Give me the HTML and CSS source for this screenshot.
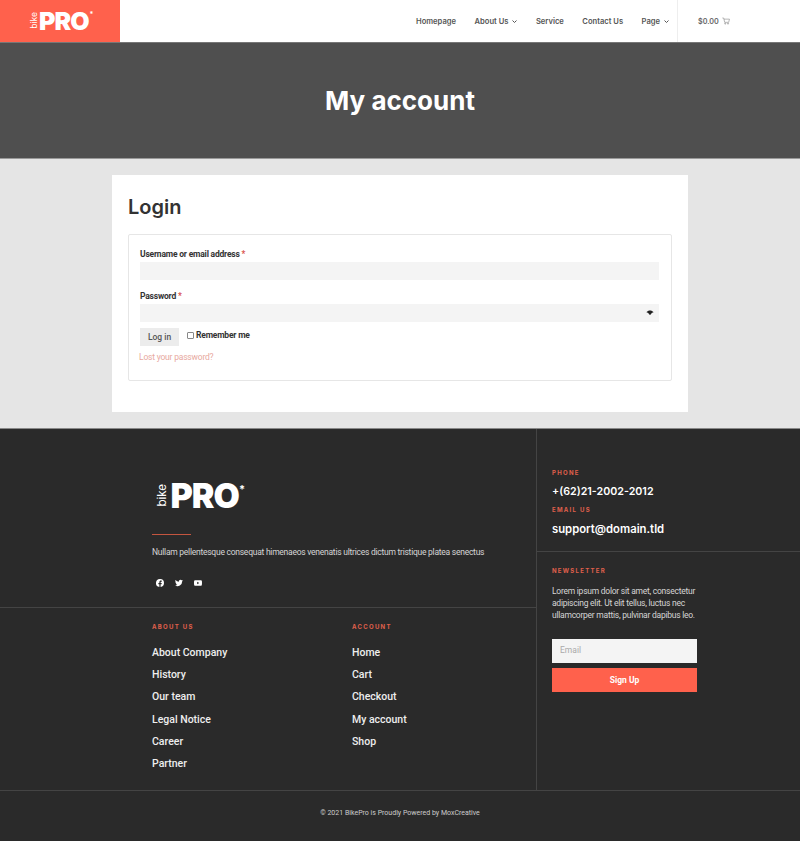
FILE: index.html
```html
<!DOCTYPE html>
<html>

<head>
    <title>My account - BikePro</title>
    <link rel="stylesheet" href="styles.css">
</head>

<body>
    <header class="site-header">
        <a class="logo-box" href="#">
            <span class="logo logo-small">
                <span class="logo-bike">bike</span><span class="logo-pro">PRO</span><span class="logo-star">*</span>
            </span>
        </a>
        <nav class="main-nav">
            <a href="#">Homepage</a>
            <a href="#">About Us
                <svg class="chevron" viewBox="0 0 8 8"><path d="M3.5 3.5l2 2 2-2" /></svg>
            </a>
            <a href="#">Service</a>
            <a href="#">Contact Us</a>
            <a href="#">Page
                <svg class="chevron" viewBox="0 0 8 8"><path d="M3.5 3.5l2 2 2-2" /></svg>
            </a>
        </nav>
        <a class="cart" href="#">$0.00
            <svg class="cart-icon" viewBox="0 0 12 12"><path d="M.5 1.5h2L4 8h6l1.2-4.8H3" /><circle cx="4.8" cy="10" r=".8" /><circle cx="9" cy="10" r=".8" /></svg>
        </a>
    </header>

    <section class="page-title">
        <h1>My account</h1>
    </section>

    <main class="page-body">
        <div class="account-card">
            <h2>Login</h2>
            <form class="login-form">
                <label class="field-label">Username or email address <span class="required">*</span></label>
                <div class="field"></div>
                <label class="field-label">Password <span class="required">*</span></label>
                <div class="field field-password">
                    <svg class="eye" viewBox="0 0 20 20"><path d="M1 8c2.500-2.500 5.500-4 9-4s6.500 1.500 9 4c-2.500 .5-4.500 1.500-5.500 3.500-1 2-2 3-3.500 3s-2.500-1-3.500-3C5.500 9.500 3.500 8.500 1 8z" /></svg>
                </div>
                <div class="login-row">
                    <button type="button" class="login-btn">Log in</button>
                    <label class="remember"><span class="checkbox"></span>Remember me</label>
                </div>
                <a class="lost-link" href="#">Lost your password?</a>
            </form>
        </div>
    </main>

    <footer class="site-footer">
        <div class="footer-main">
            <div class="footer-left">
                <div class="footer-brand">
                    <span class="logo logo-large">
                        <span class="logo-bike">bike</span><span class="logo-pro">PRO</span><span class="logo-star">*</span>
                    </span>
                    <div class="brand-rule"></div>
                    <p class="brand-text">Nullam pellentesque consequat himenaeos venenatis ultrices dictum tristique platea senectus</p>
                    <div class="social">
                        <svg viewBox="0 0 24 24"><path d="M24 12a12 12 0 1 0-13.900 11.900v-8.400H7.100V12h3V9.400c0-3 1.800-4.700 4.500-4.700 1.300 0 2.700.2 2.700.2v3h-1.500c-1.500 0-2 .9-2 1.900V12h3.400l-.5 3.500h-2.900v8.400A12 12 0 0 0 24 12z" /></svg>
                        <svg viewBox="0 0 24 24"><path d="M24 4.600a10 10 0 0 1-2.800.8 4.900 4.900 0 0 0 2.100-2.700 9.800 9.800 0 0 1-3.100 1.200 4.900 4.900 0 0 0-8.400 4.500A14 14 0 0 1 1.700 3.200a4.900 4.900 0 0 0 1.500 6.500 4.900 4.900 0 0 1-2.200-.6c0 2.300 1.600 4.400 3.900 4.900a4.900 4.900 0 0 1-2.200.1 4.900 4.900 0 0 0 4.600 3.400A9.900 9.900 0 0 1 0 19.500a14 14 0 0 0 21.500-12.400A10 10 0 0 0 24 4.600z" /></svg>
                        <svg viewBox="0 0 24 24"><path d="M23.500 6.200a3 3 0 0 0-2.100-2.100C19.500 3.500 12 3.500 12 3.500s-7.500 0-9.400.6A3 3 0 0 0 .5 6.200C0 8.100 0 12 0 12s0 3.900.5 5.800a3 3 0 0 0 2.100 2.100c1.900.6 9.400.6 9.400.6s7.500 0 9.400-.6a3 3 0 0 0 2.100-2.100c.5-1.900.5-5.800.5-5.800s0-3.900-.5-5.800zM9.500 15.600V8.400l6.300 3.600-6.300 3.600z" /></svg>
                    </div>
                </div>
                <div class="footer-links">
                    <div class="link-col">
                        <h4 class="footer-label">About Us</h4>
                        <a href="#">About Company</a>
                        <a href="#">History</a>
                        <a href="#">Our team</a>
                        <a href="#">Legal Notice</a>
                        <a href="#">Career</a>
                        <a href="#">Partner</a>
                    </div>
                    <div class="link-col">
                        <h4 class="footer-label">Account</h4>
                        <a href="#">Home</a>
                        <a href="#">Cart</a>
                        <a href="#">Checkout</a>
                        <a href="#">My account</a>
                        <a href="#">Shop</a>
                    </div>
                </div>
            </div>
            <div class="footer-right">
                <div class="contact">
                    <h4 class="footer-label">Phone</h4>
                    <div class="contact-value contact-phone">+(62)21-2002-2012</div>
                    <h4 class="footer-label">Email Us</h4>
                    <div class="contact-value">support@domain.tld</div>
                </div>
                <div class="newsletter">
                    <h4 class="footer-label">Newsletter</h4>
                    <p>Lorem ipsum dolor sit amet, consectetur adipiscing elit. Ut elit tellus, luctus nec ullamcorper mattis, pulvinar dapibus leo.</p>
                    <div class="email-box">Email</div>
                    <button type="button" class="signup-btn">Sign Up</button>
                </div>
            </div>
        </div>
        <div class="footer-bottom">© 2021 BikePro is Proudly Powered by MoxCreative</div>
    </footer>
</body>

</html>
```

FILE: styles.css
```css
* {
    box-sizing: border-box;
}

body {
    margin: 0;
    font-family: Roboto, Arial, sans-serif;
    background-color: #e5e5e5;
    color: #333;
}

a {
    text-decoration: none;
}

.site-header {
    display: flex;
    align-items: stretch;
    height: 43px;
    background-color: #fff;
    border-bottom: 1px solid #777;
}

.logo-box {
    display: flex;
    align-items: center;
    justify-content: center;
    width: 120px;
    padding-left: 3px;
    background-color: #ff614c;
}

.logo {
    display: flex;
    align-items: flex-start;
    color: #fff;
    font-family: Inter, Arial, sans-serif;
}

.logo-bike {
    writing-mode: vertical-rl;
    transform: rotate(180deg);
    font-weight: 400;
    line-height: 1;
}

.logo-pro {
    font-weight: 900;
    line-height: 1;
    letter-spacing: -1px;
}

.logo-star {
    line-height: 1;
    font-weight: 700;
}

.logo-small .logo-bike {
    font-size: 8.5px;
    margin-top: 3px;
    margin-right: 1px;
}

.logo-small .logo-pro {
    font-size: 25px;
}

.logo-small .logo-star {
    font-size: 7px;
    margin-top: 2px;
    margin-left: 1px;
}

.logo-large {
    margin-left: 5px;
}

.logo-large .logo-bike {
    font-size: 11.5px;
    margin-top: 5px;
    margin-right: 2px;
}

.logo-large .logo-pro {
    font-size: 34px;
}

.logo-large .logo-star {
    font-size: 11px;
    margin-top: 5px;
}

.main-nav {
    display: flex;
    align-items: center;
    gap: 18.5px;
    margin-left: auto;
    padding-right: 8px;
    font-family: Inter, Arial, sans-serif;
}

.main-nav a {
    display: flex;
    align-items: center;
    gap: 1px;
    font-size: 7.6px;
    font-weight: 600;
    color: #555;
}

.chevron {
    width: 8px;
    height: 8px;
    fill: none;
    stroke: #555;
    stroke-width: 1;
}

.cart {
    display: flex;
    align-items: center;
    gap: 3px;
    width: 123px;
    padding-left: 20px;
    border-left: 1px solid #eee;
    font-family: Inter, Arial, sans-serif;
    font-size: 7.2px;
    font-weight: 600;
    color: #666;
}

.cart-icon {
    width: 8px;
    height: 8px;
    fill: none;
    stroke: #777;
    stroke-width: .8;
}

.page-title {
    display: flex;
    align-items: center;
    justify-content: center;
    height: 116px;
    background-color: #4f4f4f;
    border-bottom: 1px solid #999;
}

.page-title h1 {
    margin: 0;
    font-family: Inter, Arial, sans-serif;
    font-size: 26px;
    font-weight: 700;
    color: #fff;
}

.page-body {
    height: 269px;
    padding-top: 16px;
}

.account-card {
    width: 576px;
    height: 237px;
    margin: 0 auto;
    padding: 16px;
    background-color: #fff;
}

.account-card h2 {
    margin: 0 0 14px;
    height: 29px;
    padding-top: 3px;
    line-height: 26px;
    font-family: Inter, Arial, sans-serif;
    font-size: 20px;
    font-weight: 600;
    color: #333;
}

.login-form {
    display: flex;
    flex-direction: column;
    align-items: flex-start;
    height: 147px;
    padding: 11px 12px 11px 11px;
    border: 1px solid #e6e6e6;
    border-radius: 2px;
}

.field-label {
    height: 16px;
    font-size: 8.5px;
    font-weight: 700;
    letter-spacing: -0.2px;
    color: #333;
    line-height: 16px;
}

.required {
    color: #d9534f;
}

.field {
    display: flex;
    align-items: center;
    justify-content: flex-end;
    width: 100%;
    height: 18px;
    margin-bottom: 8px;
    background-color: #f4f4f4;
}

.field-password {
    padding-right: 5px;
    margin-bottom: 6px;
}

.eye {
    width: 8px;
    height: 8px;
    fill: #222;
}

.login-row {
    display: flex;
    align-items: flex-start;
    gap: 8px;
}

.login-btn {
    width: 39px;
    height: 18px;
    padding: 0;
    border: none;
    background-color: #ececec;
    font-family: Roboto, Arial, sans-serif;
    font-size: 8.5px;
    font-weight: 500;
    color: #555;
}

.remember {
    display: flex;
    align-items: center;
    gap: 2px;
    font-size: 8.5px;
    font-weight: 700;
    letter-spacing: -0.2px;
    color: #333;
    line-height: 15px;
}

.checkbox {
    width: 7px;
    height: 7px;
    border: 1px solid #888;
    border-radius: 1px;
    background-color: #fff;
}

.lost-link {
    margin-top: 4px;
    margin-left: -1px;
    font-size: 8.5px;
    letter-spacing: -0.2px;
    line-height: 14px;
    color: #e8a9a0;
}

.site-footer {
    height: 413px;
    background-color: #2a2a2a;
    border-top: 1px solid #888;
}

.footer-main {
    display: flex;
    height: 362px;
    border-bottom: 1px solid #444;
}

.footer-left {
    width: 537px;
    border-right: 1px solid #444;
}

.footer-brand {
    height: 179px;
    padding: 50px 0 0 152px;
    border-bottom: 1px solid #444;
}

.brand-rule {
    width: 39px;
    height: 1px;
    margin-top: 21px;
    background-color: #c4553f;
}

.brand-text {
    margin: 10px 0 0;
    font-size: 8.5px;
    letter-spacing: -0.25px;
    line-height: 14px;
    color: #d5d5d5;
}

.social {
    display: flex;
    gap: 11px;
    margin-top: 20px;
    padding-left: 4px;
}

.social svg {
    width: 8px;
    height: 8px;
    fill: #fff;
}

.footer-links {
    display: flex;
    padding: 14px 0 0 152px;
}

.link-col {
    display: flex;
    flex: 0 0 200px;
    flex-direction: column;
    align-items: flex-start;
}

.link-col a {
    height: 22.2px;
    font-size: 10.5px;
    font-weight: 500;
    line-height: 22px;
    color: #eee;
}

.footer-label {
    margin: 0;
    font-family: Inter, Arial, sans-serif;
    font-size: 6px;
    font-weight: 700;
    line-height: 10px;
    letter-spacing: 1.3px;
    text-transform: uppercase;
    color: #e0604c;
}

.link-col .footer-label {
    margin-bottom: 10px;
}

.footer-right {
    flex: 1;
}

.contact {
    height: 123px;
    padding: 39px 0 0 15px;
    border-bottom: 1px solid #444;
}

.contact-value {
    height: 27px;
    font-family: Inter, Arial, sans-serif;
    font-size: 11.3px;
    font-weight: 600;
    line-height: 28px;
    color: #fff;
}

.contact-phone {
    font-size: 10.7px;
}

.newsletter {
    width: 145px;
    margin-left: 15px;
    padding-top: 14px;
}

.newsletter p {
    margin: 9px 0 0;
    font-size: 8.5px;
    letter-spacing: -0.25px;
    line-height: 12px;
    color: #d5d5d5;
}

.email-box {
    height: 24px;
    margin-top: 18px;
    padding-left: 8px;
    background-color: #f4f4f4;
    font-size: 8.5px;
    line-height: 22px;
    color: #aaa;
}

.signup-btn {
    display: block;
    width: 100%;
    height: 24px;
    margin-top: 5px;
    padding: 0;
    border: none;
    background-color: #ff614c;
    font-family: Roboto, Arial, sans-serif;
    font-size: 8.5px;
    font-weight: 700;
    color: #fff;
}

.footer-bottom {
    padding-top: 16px;
    text-align: center;
    font-size: 7px;
    line-height: 12px;
    color: #ccc;
}
```
